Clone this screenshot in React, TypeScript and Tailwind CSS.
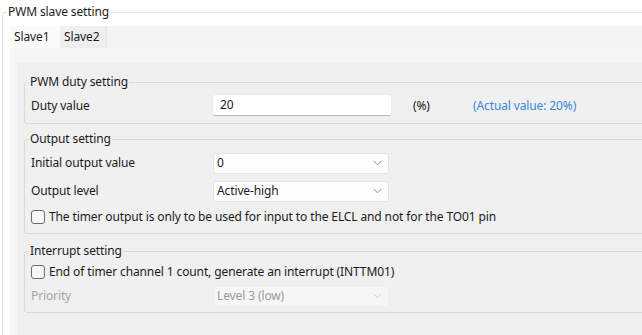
import React from "react"

const font = { fontFamily: '"Segoe UI", "Noto Sans", "Open Sans", sans-serif' }

const Chevron = ({ color = "#8a8a8a" }: { color?: string }) => (
  <svg width="9" height="6" viewBox="0 0 9 6" fill="none">
    <path d="M0.5 0.8 L4.5 4.8 L8.5 0.8" stroke={color} strokeWidth="1" />
  </svg>
)

const Select = ({ value, disabled }: { value: string; disabled?: boolean }) => (
  <div
    className={`w-[176px] h-[21px] rounded-[3px] border flex items-center justify-between pl-[3px] pr-[6px] ${
      disabled
        ? "bg-[#f6f6f6] border-[#efefef] text-[#9a9a9a]"
        : "bg-[#fdfdfd] border-[#e3e3e3] text-[#1b1b1b]"
    }`}
  >
    <span>{value}</span>
    <Chevron color={disabled ? "#c8c8c8" : "#8a8a8a"} />
  </div>
)

const Checkbox = () => (
  <span className="w-[14px] h-[14px] rounded-[3px] border border-[#6b6b6b] bg-[#f7f7f7] inline-block shrink-0" />
)

const Row = ({ label, children, muted }: { label: string; children: React.ReactNode; muted?: boolean }) => (
  <div className="flex items-center h-[28px]">
    <span className={`w-[182px] ${muted ? "text-[#a4a4a4]" : ""}`}>{label}</span>
    {children}
  </div>
)

const Group = ({ title, children, className }: { title: string; children: React.ReactNode; className?: string }) => (
  <fieldset className={`border border-[#dadada] rounded-[3px] w-[660px] pl-[6px] ${className ?? ""}`}>
    <legend className="px-[1px] ml-[-2px] leading-[16px]">{title}</legend>
    {children}
  </fieldset>
)

export default function App() {
  return (
    <div
      className="w-[642px] h-[335px] overflow-hidden bg-white text-[12px] tracking-[-0.12px] text-[#1b1b1b] pt-[4px] pl-[2px]"
      style={font}
    >
      <fieldset className="border border-[#e2e2e2] rounded-[3px] w-[700px] h-[360px] pl-[7px] pt-[6px]">
        <legend className="ml-[-3px] px-[1px] leading-[16px]">PWM slave setting</legend>

        {/* tabs */}
        <div className="flex h-[22px] bg-[#f4f4f4]">
          <div className="w-[50px] bg-[#fafafa] pl-[4px] flex items-center">Slave1</div>
          <div className="w-[47px] bg-[#efefef] border-r border-[#e4e4e4] pl-[4px] flex items-center">Slave2</div>
        </div>

        {/* tab page */}
        <div className="bg-[#f7f7f7] pl-[7px] pt-[14px] h-[400px]">
          <div className="bg-[#f0f0f0] h-[400px] pl-[7px] pt-[12px]">
            <Group title="PWM duty setting" className="pb-[6px]">
              <div className="flex items-center h-[23px] mt-[4px]">
                <span className="w-[182px]">Duty value</span>
                <div className="w-[178px] h-[21px] bg-white border-b border-[#b9b9b9] rounded-[2px] shadow-[0_0_0_1px_#ececec] flex items-center pl-[7px]">
                  20
                </div>
                <span className="ml-[22px] w-[60px]">(%)</span>
                <span className="text-[#3c86d3]">(Actual value: 20%)</span>
              </div>
            </Group>

            <Group title="Output setting" className="mt-[7px] pb-[6px]">
              <div className="mt-[2px]">
                <Row label="Initial output value">
                  <Select value="0" />
                </Row>
                <Row label="Output level">
                  <Select value="Active-high" />
                </Row>
                <div className="flex items-center gap-[4px] h-[20px] mt-[2px]">
                  <Checkbox />
                  <span>The timer output is only to be used for input to the ELCL and not for the TO01 pin</span>
                </div>
              </div>
            </Group>

            <Group title="Interrupt setting" className="mt-[9px] pb-[2px]">
              <div className="flex items-center gap-[4px] h-[20px] mt-[3px]">
                <Checkbox />
                <span>End of timer channel 1 count, generate an interrupt (INTTM01)</span>
              </div>
              <Row label="Priority" muted>
                <Select value="Level 3 (low)" disabled />
              </Row>
            </Group>
          </div>
        </div>
      </fieldset>
    </div>
  )
}
